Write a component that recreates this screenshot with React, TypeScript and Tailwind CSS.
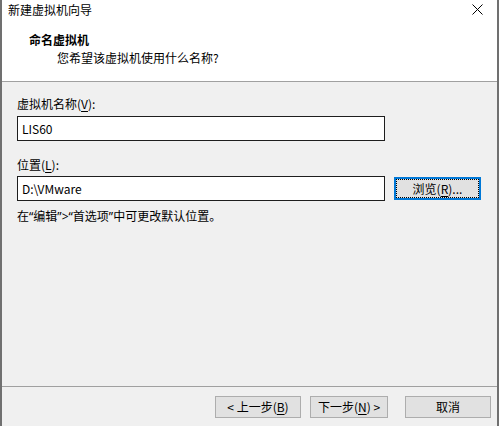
const font = { fontFamily: '"Noto Sans CJK SC", "Noto Sans", sans-serif' };
const latin = { fontFamily: '"Noto Sans", "Liberation Sans", sans-serif' };

const Btn = ({ children, w }: { children: React.ReactNode; w: string }) => (
  <button
    className={`${w} h-[22px] border border-[#adadad] bg-[#e1e1e1] text-[12px] leading-[16px] text-black flex items-center justify-center`}
  >
    {children}
  </button>
);

export default function App() {
  return (
    <div
      className="w-[499px] h-[426px] flex flex-col border-l-2 border-r-2 border-[#707070] bg-[#f0f0f0] text-black overflow-hidden"
      style={font}
    >
      {/* Header */}
      <div className="h-[82px] bg-white border-b border-[#a0a0a0] flex flex-col">
        <div className="mt-[2px] h-[16px] flex items-center justify-between pl-[6px] pr-[14px]">
          <span className="text-[12px] leading-[16px]">新建虚拟机向导</span>
          <svg width="11" height="11" viewBox="0 0 11 11" className="mt-[-2px]">
            <path d="M0.5 0.5L10.5 10.5M10.5 0.5L0.5 10.5" stroke="#000" strokeWidth="1" />
          </svg>
        </div>
        <div className="mt-[14px] pl-[27px] text-[12px] leading-[16px] font-bold">命名虚拟机</div>
        <div className="mt-[2px] pl-[55px] text-[12px] leading-[16px]">您希望该虚拟机使用什么名称?</div>
      </div>

      {/* Body */}
      <div className="flex-1 flex flex-col pl-[15px] pt-[14px]">
        <div className="text-[12px] leading-[16px]">
          虚拟机名称(<u className="underline-offset-2">V</u>):
        </div>
        <div className="mt-[4px] w-[368px] h-[25px] bg-white border border-[#1e1e1e] flex items-center pl-[4px] text-[12px]">
          LIS60
        </div>
        <div className="mt-[16px] text-[12px] leading-[16px]">
          位置(<u className="underline-offset-2">L</u>):
        </div>
        <div className="mt-[3px] flex items-center gap-[9px]">
          <div className="w-[368px] h-[25px] bg-white border border-[#1e1e1e] flex items-center pl-[4px] text-[12px]">
            D:\VMware
          </div>
          <button className="w-[87px] h-[23px] border-2 border-[#0078d7] bg-[#e1e1e1] p-0">
            <div className="w-full h-full border border-dotted border-black flex items-center justify-center text-[12px] leading-[16px]">
              浏览(<u className="underline-offset-2">R</u>)...
            </div>
          </button>
        </div>
        <div className="mt-[7px] text-[12px] leading-[16px]">
          在<span style={latin}>“</span>编辑<span style={latin}>”&gt;“</span>首选项<span style={latin}>”</span>中可更改默认位置。
        </div>
      </div>

      {/* Footer */}
      <div className="h-[40px] border-t border-[#a0a0a0] flex justify-end items-start pt-[9px] pr-[6px]">
        <Btn w="w-[86px]">
          &lt; 上一步(<u className="underline-offset-2">B</u>)
        </Btn>
        <div className="w-[9px]" />
        <Btn w="w-[78px]">
          下一步(<u className="underline-offset-2">N</u>) &gt;
        </Btn>
        <div className="w-[17px]" />
        <Btn w="w-[86px]">取消</Btn>
      </div>
    </div>
  );
}
